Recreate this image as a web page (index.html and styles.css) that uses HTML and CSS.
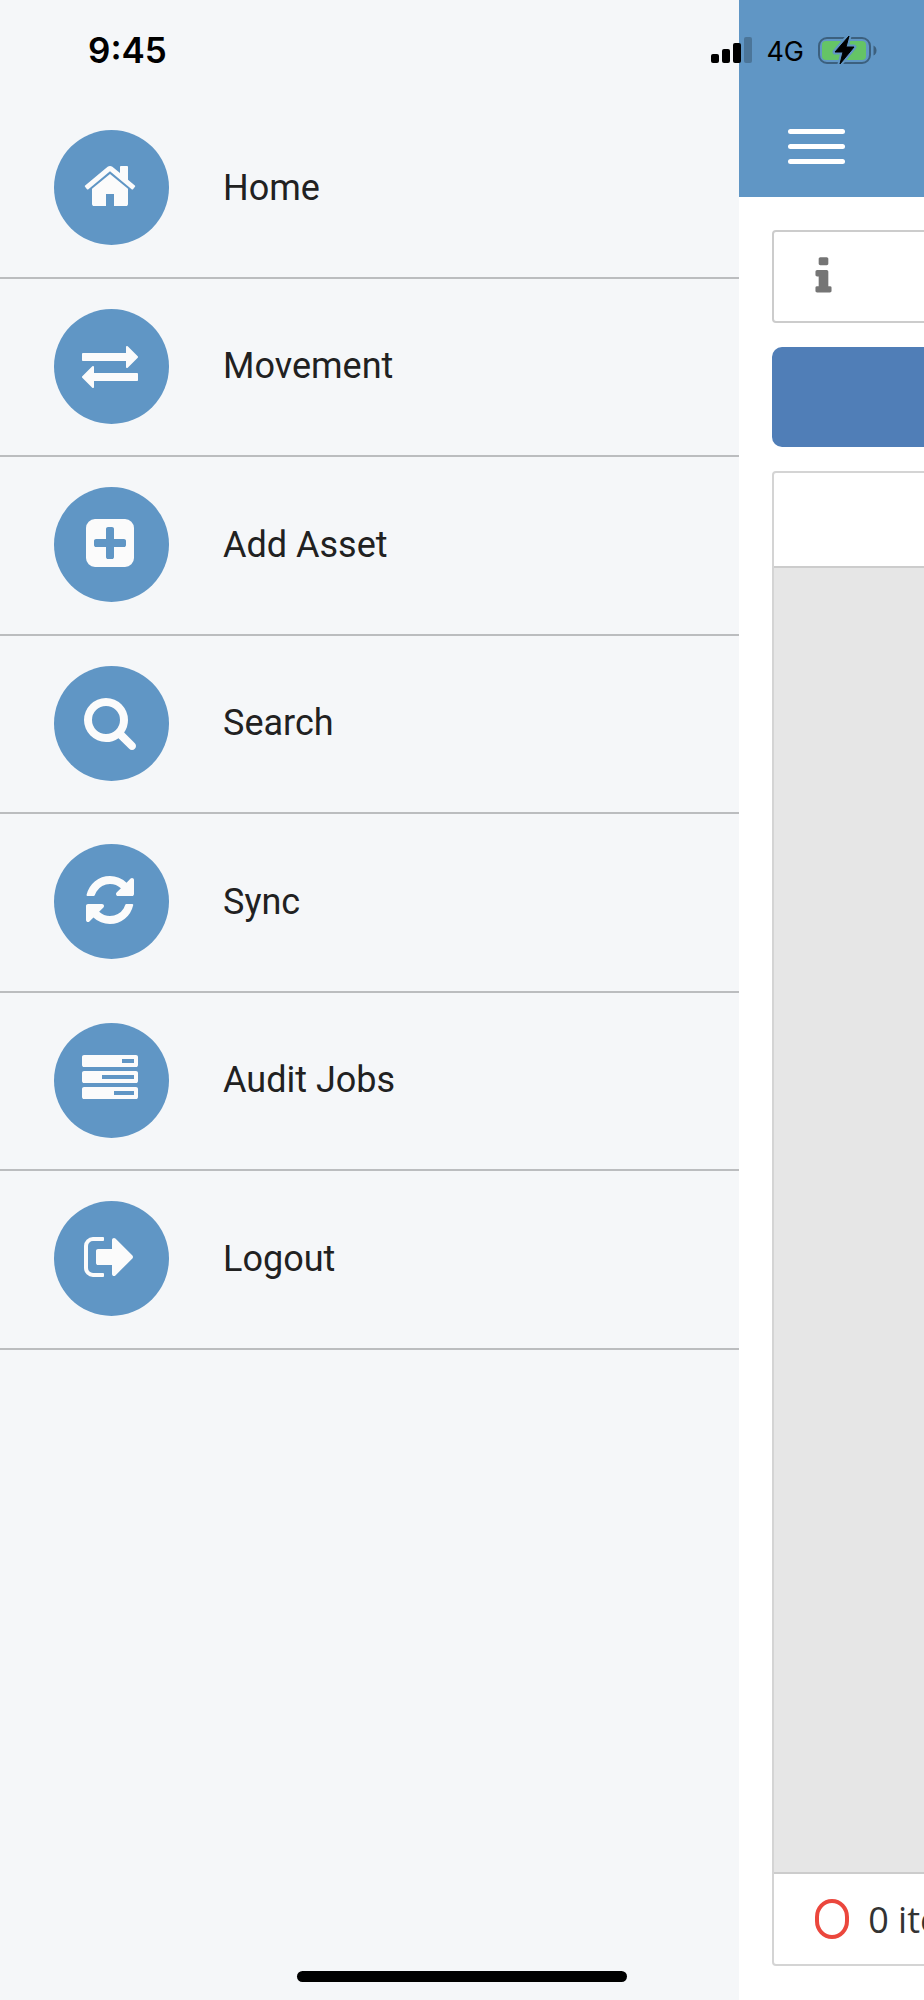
FILE: index.html
```html
<!DOCTYPE html>
<html lang="en">
<head>
  <meta charset="UTF-8">
  <meta name="viewport" content="width=device-width, initial-scale=1.0">
  <title>Menu</title>
  <link rel="stylesheet" href="styles.css">
</head>
<body>
  <div class="status-bar">
    <span class="time">9:45</span>
    <div class="status-icons">
      <svg class="signal" viewBox="0 0 41 26" aria-hidden="true">
        <rect x="0" y="17" width="8" height="9" rx="2"/>
        <rect x="11" y="12" width="8" height="14" rx="2"/>
        <rect x="22" y="6" width="8" height="20" rx="2"/>
        <rect x="33" y="0" width="8" height="26" rx="2" opacity=".22"/>
      </svg>
      <span class="network">4G</span>
      <svg class="battery" viewBox="0 0 58 28" aria-hidden="true">
        <rect x="1" y="2" width="51" height="25" rx="8" fill="none" stroke="#3c607e" stroke-width="2"/>
        <path d="M55.500 9.500q3 1.500 3 5t-3 5z" fill="#3c607e"/>
        <rect x="4" y="5" width="44" height="19" rx="4" fill="#65c466"/>
        <path d="M31 0L17 16h8l-3 12 14-17h-8l3-11z" fill="#000" stroke="#6096c5" stroke-width="5" stroke-linejoin="round"/>
        <path d="M31 0L17 16h8l-3 12 14-17h-8l3-11z" fill="#000" stroke="#000" stroke-width="1" stroke-linejoin="round"/>
      </svg>
    </div>
  </div>

  <div class="app">
    <nav class="drawer">
      <ul class="menu">
        <li><a href="#home">
          <span class="menu-icon"><svg viewBox="0 0 1792 1792" aria-hidden="true"><path d="M1472 992v480q0 26-19 45t-45 19h-384v-384h-256v384h-384q-26 0-45-19t-19-45v-480q0-1 .5-3t.5-3l575-474 575 474q1 2 1 6zm223-69l-62 74q-8 9-21 11h-3q-13 0-21-7l-692-577-692 577q-12 8-24 7-13-2-21-11l-62-74q-8-10-7-23.500t11-21.500l719-599q32-26 76-26t76 26l244 204v-195q0-14 9-23t23-9h192q14 0 23 9t9 23v408l219 182q10 8 11 21.500t-7 23.500z"/></svg></span>
          Home
        </a></li>
        <li><a href="#movement">
          <span class="menu-icon"><svg viewBox="0 0 1792 1792" aria-hidden="true"><path d="M1792 1184v192q0 13-9.500 22.500t-22.500 9.500h-1376v192q0 13-9.500 22.500t-22.500 9.500q-12 0-24-10l-319-320q-9-9-9-22 0-14 9-23l320-320q9-9 23-9 13 0 22.500 9.500t9.500 22.500v192h1376q13 0 22.500 9.500t9.500 22.500zm0-544q0 14-9 23l-320 320q-9 9-23 9-13 0-22.500-9.500t-9.500-22.500v-192h-1376q-13 0-22.500-9.500t-9.500-22.500v-192q0-13 9.500-22.500t22.500-9.500h1376v-192q0-14 9-23t23-9q12 0 24 10l319 319q9 9 9 23z"/></svg></span>
          Movement
        </a></li>
        <li><a href="#add-asset">
          <span class="menu-icon"><svg viewBox="0 0 1792 1792" aria-hidden="true"><path d="M1408 960v-128q0-26-19-45t-45-19h-320v-320q0-26-19-45t-45-19h-128q-26 0-45 19t-19 45v320h-320q-26 0-45 19t-19 45v128q0 26 19 45t45 19h320v320q0 26 19 45t45 19h128q26 0 45-19t19-45v-320h320q26 0 45-19t19-45zm256-544v960q0 119-84.500 203.500t-203.500 84.500h-960q-119 0-203.500-84.500t-84.500-203.500v-960q0-119 84.500-203.500t203.500-84.500h960q119 0 203.500 84.500t84.500 203.500z"/></svg></span>
          Add Asset
        </a></li>
        <li><a href="#search">
          <span class="menu-icon"><svg viewBox="0 0 1792 1792" aria-hidden="true"><path d="M1216 832q0-185-131.500-316.500t-316.500-131.500-316.500 131.500-131.500 316.500 131.500 316.500 316.500 131.500 316.500-131.500 131.500-316.500zm512 832q0 52-38 90t-90 38q-54 0-90-38l-343-342q-179 124-399 124-143 0-273.500-55.500t-225-150-150-225-55.500-273.500 55.500-273.500 150-225 225-150 273.500-55.500 273.500 55.500 225 150 150 225 55.500 273.500q0 220-124 399l343 343q37 37 37 90z"/></svg></span>
          Search
        </a></li>
        <li><a href="#sync">
          <span class="menu-icon"><svg viewBox="0 0 1792 1792" aria-hidden="true"><path d="M1639 1056q0 5-1 7-64 268-268 434.500t-478 166.500q-146 0-282.500-55t-243.500-157l-129 129q-19 19-45 19t-45-19-19-45v-448q0-26 19-45t45-19h448q26 0 45 19t19 45-19 45l-137 137q71 66 161 102t187 36q134 0 250-65t186-179q11-17 53-117 8-23 30-23h192q13 0 22.500 9.500t9.500 22.500zm25-800v448q0 26-19 45t-45 19h-448q-26 0-45-19t-19-45 19-45l138-138q-148-137-349-137-134 0-250 65t-186 179q-11 17-53 117-8 23-30 23h-199q-13 0-22.500-9.500t-9.500-22.500v-7q65-268 270-434.500t480-166.500q146 0 284 55.500t245 156.500l130-129q19-19 45-19t45 19 19 45z"/></svg></span>
          Sync
        </a></li>
        <li><a href="#audit-jobs">
          <span class="menu-icon"><svg viewBox="0 0 1792 1792" aria-hidden="true"><path d="M1024 1408h640v-128h-640v128zm-384-512h1024v-128h-1024v128zm640-512h384v-128h-384v128zm512 832v256q0 26-19 45t-45 19h-1664q-26 0-45-19t-19-45v-256q0-26 19-45t45-19h1664q26 0 45 19t19 45zm0-512v256q0 26-19 45t-45 19h-1664q-26 0-45-19t-19-45v-256q0-26 19-45t45-19h1664q26 0 45 19t19 45zm0-512v256q0 26-19 45t-45 19h-1664q-26 0-45-19t-19-45v-256q0-26 19-45t45-19h1664q26 0 45 19t19 45z"/></svg></span>
          Audit Jobs
        </a></li>
        <li><a href="#logout">
          <span class="menu-icon"><svg viewBox="0 0 1792 1792" aria-hidden="true"><path d="M704 1440q0 4 1 20t.5 26.500-3 23.500-10 19.500-20.500 6.500h-320q-119 0-203.500-84.500t-84.500-203.500v-704q0-119 84.500-203.500t203.500-84.500h320q13 0 22.500 9.500t9.500 22.500q0 4 1 20t.5 26.500-3 23.500-10 19.500-20.500 6.500h-320q-66 0-113 47t-47 113v704q0 66 47 113t113 47h312l11.500 1 11.500 3 8 5.500 7 9 2 13.500zm928-544q0 26-19 45l-544 544q-19 19-45 19t-45-19-19-45v-288h-448q-26 0-45-19t-19-45v-384q0-26 19-45t45-19h448v-288q0-26 19-45t45-19 45 19l544 544q19 19 19 45z"/></svg></span>
          Logout
        </a></li>
      </ul>
    </nav>

    <div class="page">
      <header class="toolbar">
        <button class="menu-toggle" type="button" aria-label="Menu">
          <span></span><span></span><span></span>
        </button>
      </header>
      <main class="content">
        <div class="info-box">
          <svg viewBox="0 0 1792 1792" aria-hidden="true"><path d="M1216 1344v128q0 26-19 45t-45 19h-512q-26 0-45-19t-19-45v-128q0-26 19-45t45-19h64v-384h-64q-26 0-45-19t-19-45v-128q0-26 19-45t45-19h384q26 0 45 19t19 45v576h64q26 0 45 19t19 45zm-128-1152v192q0 26-19 45t-45 19h-256q-26 0-45-19t-19-45v-192q0-26 19-45t45-19h256q26 0 45 19t19 45z"/></svg>
        </div>
        <button class="action-button" type="button" aria-label="Add"></button>
        <section class="list">
          <div class="list-header"></div>
          <div class="list-body"></div>
          <div class="list-footer">
            <svg viewBox="0 0 34 40" aria-hidden="true"><rect x="2" y="2" width="30" height="36" rx="15" ry="16"/></svg>
            <span>0 items</span>
          </div>
        </section>
      </main>
    </div>
  </div>

  <div class="home-indicator"></div>
</body>
</html>
```
FILE: styles.css
```css
* {
  box-sizing: border-box;
}
body {
  margin: 0;
  font-family: Roboto, sans-serif;
  font-size: 36px;
  color: #212121;
  background-color: #fff;
  overflow: hidden;
}
button {
  border: none;
  padding: 0;
  cursor: pointer;
}

/* status bar lies over the drawer and the page */
.status-bar {
  position: absolute;
  top: 0;
  left: 0;
  right: 0;
  z-index: 2;
  height: 100px;
  padding: 0 48px 0 88px;
  display: flex;
  align-items: center;
  justify-content: space-between;
  font-family: Inter, sans-serif;
  color: #000;
}
.time {
  font-size: 35px;
  font-weight: 600;
}
.status-icons {
  display: flex;
  align-items: center;
  gap: 14px;
}
.signal {
  width: 41px;
  height: 26px;
}
.network {
  font-size: 27px;
  line-height: 30px;
  padding-top: 3px;
}
.battery {
  width: 58px;
  height: 28px;
  overflow: visible;
}

/* drawer pushes the page to the right */
.app {
  display: flex;
  height: 100vh;
  overflow: hidden;
}
.drawer {
  flex: 0 0 80%;
  padding-top: 100px;
  background-color: #f5f7f9;
}
.menu {
  list-style: none;
  margin: 0;
  padding: 0;
  display: grid;
  grid-auto-rows: 1fr;
  min-height: 1250px;
}
.menu li {
  border-bottom: 2px solid #bbbdbf;
}
.menu a {
  display: flex;
  align-items: center;
  gap: 54px;
  padding: 30px 54px;
  color: inherit;
  text-decoration: none;
}
.menu-icon {
  display: flex;
  align-items: center;
  justify-content: center;
  width: 115px;
  height: 115px;
  padding: 0 3px 3px 0;
  border-radius: 50%;
  background-color: #6096c5;
}
.menu-icon svg {
  width: 56px;
  height: 56px;
  fill: #fbfbfb;
}

.page {
  flex: 0 0 100%;
  display: flex;
  flex-direction: column;
}
.toolbar {
  height: 197px;
  padding: 129px 49px 0;
  background-color: #6096c5;
}
.menu-toggle {
  display: flex;
  flex-direction: column;
  gap: 10px;
  width: 57px;
  background: none;
}
.menu-toggle span {
  width: 100%;
  height: 5px;
  border-radius: 3px;
  background-color: #fff;
}
.content {
  flex: 1;
  display: flex;
  flex-direction: column;
  gap: 24px;
  padding: 33px 33px 34px;
}
.info-box {
  display: flex;
  align-items: center;
  height: 93px;
  padding: 0 27px;
  border: 2px solid #ccc;
  border-radius: 4px;
}
.info-box svg {
  width: 45px;
  height: 45px;
  fill: #757575;
}
.action-button {
  height: 100px;
  border-radius: 10px;
  background-color: #507eb7;
}
.list {
  flex: 1;
  display: flex;
  flex-direction: column;
  border: 2px solid #d4d4d4;
  border-radius: 4px;
}
.list-header {
  height: 95px;
  border-bottom: 2px solid #ccc;
}
.list-body {
  flex: 1;
  background-color: #e6e6e6;
}
.list-footer {
  display: flex;
  align-items: center;
  gap: 19px;
  height: 92px;
  padding: 0 41px;
  border-top: 2px solid #ccc;
  font-family: "Open Sans", sans-serif;
  color: #333;
}
.list-footer svg {
  width: 34px;
  height: 40px;
  fill: none;
  stroke: #eb473d;
  stroke-width: 4;
}

.home-indicator {
  position: absolute;
  bottom: 18px;
  left: 50%;
  width: 330px;
  height: 11px;
  margin-left: -165px;
  border-radius: 6px;
  background-color: #000;
}
```
